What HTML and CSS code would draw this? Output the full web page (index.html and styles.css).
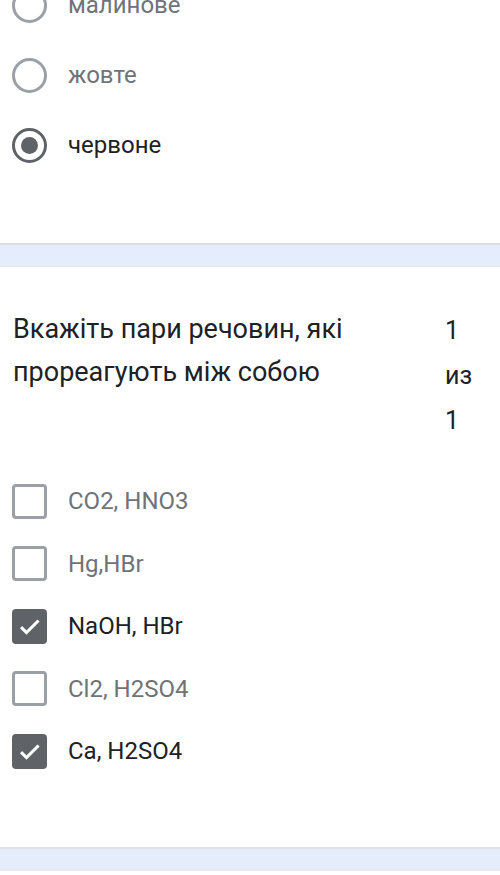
FILE: index.html
```html
<!DOCTYPE html>
<html lang="uk">
<head>
<meta charset="utf-8">
<link rel="stylesheet" href="styles.css">
</head>
<body>
<section class="card card-top">
  <div class="options">
    <div class="opt"><span class="radio"></span><span class="label muted">малинове</span></div>
    <div class="opt"><span class="radio"></span><span class="label muted">жовте</span></div>
    <div class="opt"><span class="radio on"></span><span class="label">червоне</span></div>
  </div>
</section>
<div class="divider"></div>
<section class="card card-q">
  <div class="qhead">
    <div class="qtext">Вкажіть пари речовин, які прореагують між собою</div>
    <div class="points">1 из 1</div>
  </div>
  <div class="checks">
    <div class="chk"><span class="box"></span><span class="label muted">CO2, HNO3</span></div>
    <div class="chk"><span class="box"></span><span class="label muted">Hg,HBr</span></div>
    <div class="chk"><span class="box on"><svg viewBox="0 0 24 24" width="31" height="31"><path d="M5 12.5l4.5 4.5L19.5 7" fill="none" stroke="#fff" stroke-width="2.5"/></svg></span><span class="label">NaOH, HBr</span></div>
    <div class="chk"><span class="box"></span><span class="label muted">Cl2, H2SO4</span></div>
    <div class="chk"><span class="box on"><svg viewBox="0 0 24 24" width="31" height="31"><path d="M5 12.5l4.5 4.5L19.5 7" fill="none" stroke="#fff" stroke-width="2.5"/></svg></span><span class="label">Ca, H2SO4</span></div>
  </div>
</section>
<div class="divider"></div>
</body>
</html>
```
FILE: styles.css
```css
html, body {
  margin: 0;
  padding: 0;
  background: #fff;
  font-family: Roboto, "Noto Sans", sans-serif;
  color: #202124;
  overflow: hidden;
}
.card {
  display: flex;
  flex-direction: column;
}
.card-top {
  height: 243px;
}
.options {
  margin-top: -30px;
  display: flex;
  flex-direction: column;
}
.opt, .chk {
  display: flex;
  align-items: center;
  gap: 21px;
  padding-left: 12px;
}
.opt { height: 70px; flex: none; }
.chk { height: 62.5px; flex: none; }
.radio {
  box-sizing: border-box;
  width: 35px;
  height: 35px;
  border-radius: 50%;
  border: 3px solid #9aa0a6;
  display: flex;
  align-items: center;
  justify-content: center;
  flex: none;
}
.radio.on {
  border-color: #5f6368;
}
.radio.on::after {
  content: "";
  width: 17px;
  height: 17px;
  border-radius: 50%;
  background: #5f6368;
}
.label {
  font-size: 24px;
  color: #202124;
}
.label.muted { color: #6f7378; }
.divider {
  height: 20px;
  background: #e5edfc;
  border-top: 2px solid #dcdfe4;
  border-bottom: 2px solid #e6e9ee;
}
.card-q {
  height: 580px;
  padding-top: 41px;
  box-sizing: border-box;
}
.qhead {
  display: flex;
  padding-left: 13px;
}
.qtext {
  width: 410px;
  font-size: 27px;
  line-height: 43px;
  color: #202124;
}
.points {
  width: 30px;
  margin-left: 22px;
  font-size: 25px;
  line-height: 45px;
  color: #202124;
}
.checks {
  margin-top: 27px;
  display: flex;
  flex-direction: column;
}
.box {
  box-sizing: border-box;
  width: 35px;
  height: 35px;
  border-radius: 4px;
  border: 3px solid #9aa0a6;
  flex: none;
  display: flex;
  align-items: center;
  justify-content: center;
}
.box.on {
  background: #5f6368;
  border-color: #5f6368;
}
```
